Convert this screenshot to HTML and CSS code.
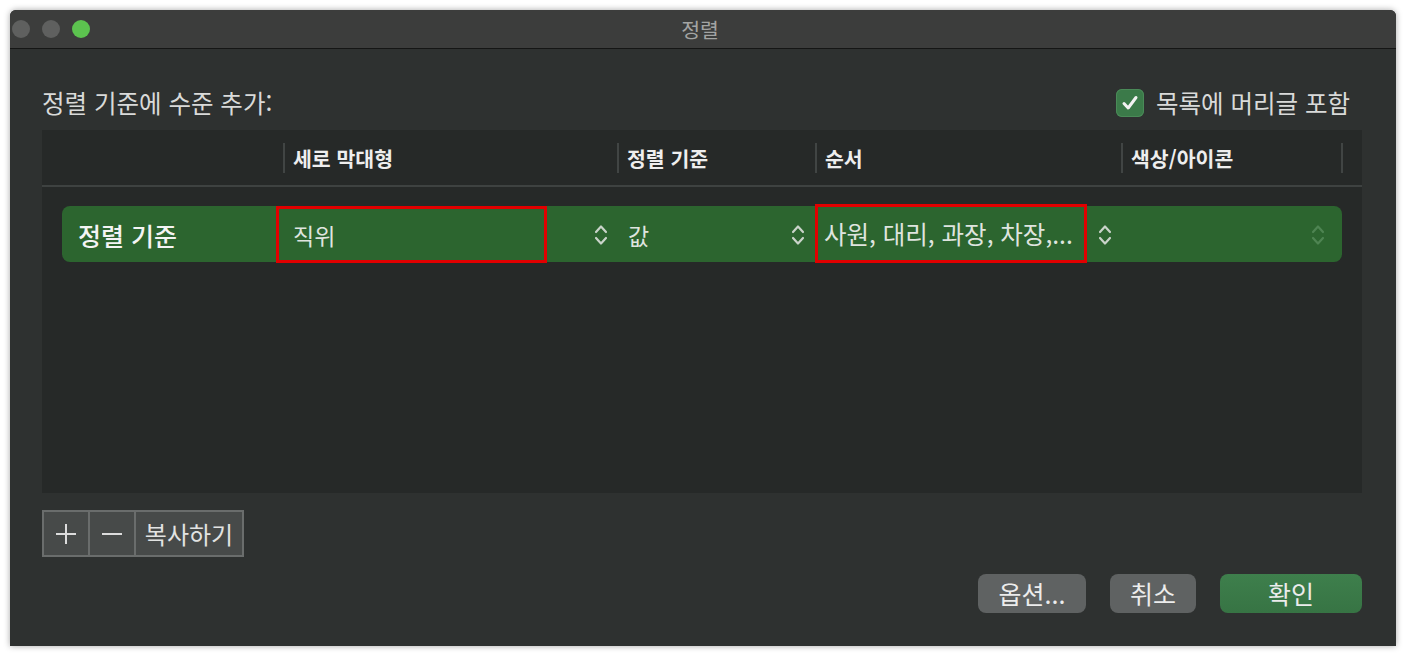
FILE: index.html
```html
<!DOCTYPE html>
<html lang="ko">
<head>
  <meta charset="UTF-8" />
  <title>정렬</title>
  <link rel="stylesheet" href="styles.css">
</head>
<body>
  <div class="window">
    <div class="titlebar">
      <div class="lights">
        <span class="light"></span>
        <span class="light"></span>
        <span class="light green"></span>
      </div>
      <div class="title">정렬</div>
      <div></div>
    </div>

    <div class="content">
      <div class="top">
        <span class="label">정렬 기준에 수준 추가:</span>
        <label class="check">
          <span class="box">
            <svg width="20" height="20" viewBox="0 0 20 20"><path d="M4 10.5 L8.2 15 L16 4.5" fill="none" stroke="#f2f2f2" stroke-width="3" stroke-linecap="round" stroke-linejoin="round"/></svg>
          </span>
          목록에 머리글 포함
        </label>
      </div>

      <div class="table">
        <div class="thead">
          <div class="th"></div>
          <div class="th sep">세로 막대형</div>
          <div class="th sep">정렬 기준</div>
          <div class="th sep">순서</div>
          <div class="th sep">색상/아이콘</div>
          <div class="th sep"></div>
        </div>
        <div class="tbody">
          <div class="level">
            <div class="cell name">정렬 기준</div>
            <div class="cell col-field">
              <span class="hl">직위</span>
              <svg class="chev" width="14" height="24" viewBox="0 0 14 24"><path d="M2 9 L7 3.5 L12 9 M2 15 L7 20.5 L12 15" fill="none" stroke="currentColor" stroke-width="2.2" stroke-linecap="round" stroke-linejoin="round"/></svg>
            </div>
            <div class="cell col-key">
              <span class="value">값</span>
              <svg class="chev" width="14" height="24" viewBox="0 0 14 24"><path d="M2 9 L7 3.5 L12 9 M2 15 L7 20.5 L12 15" fill="none" stroke="currentColor" stroke-width="2.2" stroke-linecap="round" stroke-linejoin="round"/></svg>
            </div>
            <div class="cell col-order">
              <span class="hl">사원, 대리, 과장, 차장,...</span>
              <svg class="chev" width="14" height="24" viewBox="0 0 14 24"><path d="M2 9 L7 3.5 L12 9 M2 15 L7 20.5 L12 15" fill="none" stroke="currentColor" stroke-width="2.2" stroke-linecap="round" stroke-linejoin="round"/></svg>
            </div>
            <div class="cell col-color">
              <svg class="chev dim" width="14" height="24" viewBox="0 0 14 24"><path d="M2 9 L7 3.5 L12 9 M2 15 L7 20.5 L12 15" fill="none" stroke="currentColor" stroke-width="2.2" stroke-linecap="round" stroke-linejoin="round"/></svg>
            </div>
          </div>
        </div>
      </div>

      <div class="tools">
        <button class="tool icon">
          <svg width="22" height="22" viewBox="0 0 22 22"><path d="M11 1 V21 M1 11 H21" stroke="#dcdcdc" stroke-width="2"/></svg>
        </button>
        <button class="tool icon">
          <svg width="22" height="22" viewBox="0 0 22 22"><path d="M1 11 H21" stroke="#dcdcdc" stroke-width="2"/></svg>
        </button>
        <button class="tool text">복사하기</button>
      </div>

      <div class="actions">
        <button class="btn options">옵션...</button>
        <button class="btn cancel">취소</button>
        <button class="btn ok">확인</button>
      </div>
    </div>
  </div>
</body>
</html>
```

FILE: styles.css
```css
body {
  margin: 0;
  background: #ffffff;
  font-family: "Noto Sans CJK KR", "Noto Sans", sans-serif;
  color: #e2e3e2;
}

.window {
  width: 1386px;
  height: 636px;
  margin: 10px;
  background: #2e3130;
  border-radius: 6px 6px 0 0;
  box-shadow: 0 0 6px rgba(0, 0, 0, 0.35);
  display: flex;
  flex-direction: column;
  overflow: hidden;
}

/* title bar */
.titlebar {
  height: 38px;
  background: #3c3d3c;
  border-bottom: 1px solid #151615;
  display: grid;
  grid-template-columns: 1fr auto 1fr;
  align-items: center;
  flex-shrink: 0;
}

.lights {
  display: flex;
  gap: 12px;
  padding-left: 2px;
}

.light {
  width: 18px;
  height: 18px;
  border-radius: 50%;
  background: #5f605f;
}

.light.green {
  background: #5cc34f;
}

.title {
  font-size: 20.5px;
  color: #a3a4a3;
  line-height: 1;
  margin-left: -6px;
}

/* content */
.content {
  padding: 40px 34px 0 32px;
  display: flex;
  flex-direction: column;
}

.top {
  height: 28px;
  display: flex;
  justify-content: space-between;
  align-items: center;
  margin-bottom: 13px;
}

.label {
  font-size: 24.5px;
  color: #d9dad9;
  line-height: 1;
}

.check {
  display: flex;
  align-items: center;
  gap: 12px;
  font-size: 24.5px;
  color: #d9dad9;
  line-height: 1;
  margin-right: 12px;
}

.box {
  width: 28px;
  height: 28px;
  border-radius: 6px;
  background: #3b7a49;
  box-shadow: inset 0 0 0 1px #4a8a58;
  display: flex;
  align-items: center;
  justify-content: center;
}

/* table */
.table {
  background: #262928;
  height: 363px;
  display: flex;
  flex-direction: column;
}

.thead {
  height: 55px;
  border-bottom: 2px solid #3e4241;
  display: grid;
  grid-template-columns: 241px 334px 198px 306px 220px 21px;
  align-items: center;
}

.th {
  height: 30px;
  display: flex;
  align-items: center;
  font-size: 20.5px;
  font-weight: bold;
  color: #eeeeee;
  padding-left: 8px;
}

.th.sep {
  border-left: 2px solid #414544;
}

.tbody {
  padding: 19px 20px 0 20px;
}

.level {
  height: 56px;
  background: #2c652f;
  border-radius: 8px;
  display: grid;
  grid-template-columns: 221px 334px 198px 306px 221px;
}

.cell {
  display: flex;
  align-items: center;
  justify-content: space-between;
  font-size: 23px;
  color: #dfe4df;
}

.cell.name {
  padding-left: 16px;
  font-size: 25px;
  color: #f4f4f4;
  font-weight: 500;
}

.hl {
  box-sizing: border-box;
  height: 57px;
  border: 3px solid #e10000;
  display: flex;
  align-items: center;
  align-self: flex-start;
}

.col-field .hl {
  width: 271px;
  margin-left: -7px;
  padding-left: 14px;
}

.col-field .chev {
  margin-right: 9px;
}

.col-key .value {
  padding-left: 11px;
}

.col-key .chev {
  margin-right: 10px;
}

.col-order .hl {
  width: 272px;
  height: 59px;
  margin-top: -2px;
  padding-left: 6px;
  font-size: 24.5px;
  white-space: nowrap;
}

.col-order .chev {
  margin-right: 9px;
}

.col-color {
  justify-content: flex-end;
}

.col-color .chev {
  margin-right: 17px;
}

.chev {
  color: #c9d3c9;
}

.chev.dim {
  color: #4e8452;
}

/* tools */
.tools {
  display: flex;
  margin-top: 17px;
}

.tool {
  height: 47px;
  background: #474a49;
  border: 2px solid #6a6d6c;
  margin-right: -2px;
  color: #e2e3e2;
  font-family: inherit;
  font-size: 24px;
  display: flex;
  align-items: center;
  justify-content: center;
  padding: 0;
}

.tool.icon {
  width: 48px;
}

.tool.text {
  width: 110px;
}

/* actions */
.actions {
  display: flex;
  justify-content: flex-end;
  gap: 24px;
  margin-top: 17px;
}

.btn {
  height: 39px;
  border: none;
  border-radius: 8px;
  font-family: inherit;
  font-size: 25px;
  color: #ececec;
  line-height: 1;
  padding: 0;
}

.btn.options {
  width: 108px;
  background: #5f6262;
}

.btn.cancel {
  width: 86px;
  background: #5f6262;
}

.btn.ok {
  width: 142px;
  background: linear-gradient(#3e7f4c, #377444);
}
```
